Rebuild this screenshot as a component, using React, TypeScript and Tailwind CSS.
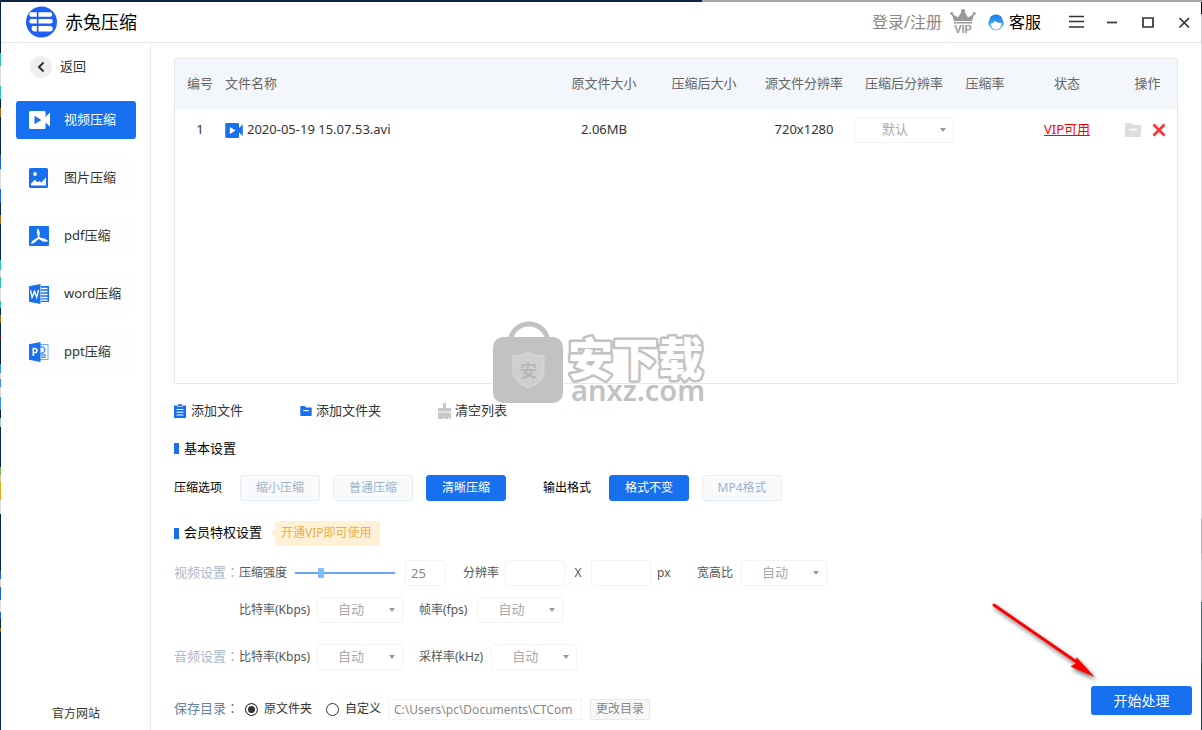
import { useState, type ReactNode } from "react";
import clsx from "clsx";

const MENU = [
  { id: "video", label: "视频压缩", icon: <VideoIcon className="h-[18px] w-[21px]" /> },
  { id: "image", label: "图片压缩", icon: <ImageIcon /> },
  { id: "pdf", label: "pdf压缩", icon: <PdfIcon /> },
  { id: "word", label: "word压缩", icon: <WordIcon /> },
  { id: "ppt", label: "ppt压缩", icon: <PptIcon /> },
];

// desktop showing through next to the window: [share of height, colour]
const LEFT_EDGE: [number, string][] = [
  [51, "#06234a"], [13, "#1fc4c4"], [20, "#d8dcdf"], [13, "#1fc4c4"], [9, "#06234a"], [9, "#b06a10"],
  [39, "#06234a"], [14, "#1f62e8"], [20, "#dcdcdc"], [14, "#1f62e8"], [12, "#06234a"], [9, "#b06a10"],
  [36, "#06234a"], [10, "#1fc4c4"], [7, "#dcdcdc"], [11, "#1fc4c4"], [13, "#dcdcdc"], [7, "#1fc4c4"],
  [7, "#06234a"], [8, "#b06a10"], [12, "#06234a"], [5, "#7a0c1c"], [24, "#06234a"], [9, "#3592e8"],
  [6, "#dcdcdc"], [9, "#3592e8"], [10, "#dcdcdc"], [13, "#3592e8"], [8, "#06234a"], [9, "#9cc8c8"],
  [40, "#06234a"], [8, "#74b84a"], [7, "#c9c9a0"], [18, "#e8a818"], [14, "#dcdcdc"], [57, "#06234a"],
  [8, "#1f62e8"], [8, "#dcdcdc"], [13, "#1f62e8"], [12, "#dcdcdc"], [7, "#1f62e8"], [10, "#06234a"],
  [4, "#b06a10"], [98, "#06234a"],
];

const RIGHT_EDGE: [number, string][] = [
  [12, "#111"], [30, "#cfcfcf"], [475, "#dedede"], [35, "#b4b4b4"], [50, "#c8c8c8"], [60, "#1b74b4"], [68, "#134a78"],
];

function Edge({ bands }: { bands: [number, string][] }) {
  return (
    <div className="flex w-px shrink-0 flex-col" aria-hidden>
      {bands.map(([share, color], i) => (
        <span key={i} style={{ flexGrow: share, backgroundColor: color }} />
      ))}
    </div>
  );
}

function LogoIcon() {
  return (
    <svg viewBox="0 0 32 32" className="size-8">
      <circle cx="16.500" cy="16" r="15.500" fill="#1f5ff5" />
      <g fill="#fff">
        <path d="M7.500 6.300h4.300v4.500H6A2.300 2.300 0 0 1 7.500 6.300zM13.500 6.300h11.500a2.250 2.250 0 0 1 0 4.500H13.500z" />
        <path d="M6.500 13h5.300v4.500H6.500a2.250 2.250 0 0 1 0-4.500zM13.500 13h12a2.250 2.250 0 0 1 0 4.500h-12z" />
        <path d="M7.300 20h4.500v5.500H9a3.500 3.500 0 0 1-1.700-5.500zM13.500 20h11.500a2.700 2.700 0 0 1 0 5.500H13.500z" />
      </g>
    </svg>
  );
}

function VideoIcon({ className }: { className?: string }) {
  return (
    <svg viewBox="0 0 21 18" className={className}>
      <path
        fillRule="evenodd"
        fill="currentColor"
        d="M1.500 0H15a1.500 1.500 0 0 1 1.500 1.500V6L21 1.500v14L16.500 11.500v5A1.500 1.500 0 0 1 15 18H1.500A1.500 1.500 0 0 1 0 16.500v-15A1.500 1.500 0 0 1 1.500 0zM5.500 4.800v8.400l6.800-4.200z"
      />
    </svg>
  );
}

function ImageIcon() {
  return (
    <svg viewBox="0 0 20 20" className="size-5">
      <rect width="19" height="20" rx="1.500" fill="#1670f0" />
      <circle cx="6" cy="6" r="1.900" fill="#fff" />
      <path d="M2 17.500v-2l3.800-3.700 2.700 2.400 1.800-1.200 2 1.500L17 9.500v8z" fill="#fff" />
    </svg>
  );
}

function PdfIcon() {
  return (
    <svg viewBox="0 0 20 20" className="size-5">
      <rect width="20" height="20" rx="1" fill="#1670f0" />
      <path
        d="M8.800 3.500c2 2.300 1.600 5.300 0 8.500-1.500 2.600-4 4.500-6 5 1.600-2.500 4.200-4 7.200-4.500 3-.4 6 .3 8 2.300-3 .7-6-.8-7.700-3.300C8.800 9.500 8.300 6 8.800 3.500z"
        fill="none"
        stroke="#fff"
        strokeWidth="1.400"
        strokeLinejoin="round"
      />
    </svg>
  );
}

function WordIcon() {
  return (
    <svg viewBox="0 0 20 20" className="size-5">
      <path d="M12 2h8v16h-8z" fill="#1670f0" />
      <path d="M12 4.500h6.500M12 7.500h6.500M12 10.500h6.500M12 13.500h6.500M12 16.200h6.500" stroke="#fff" strokeWidth="1.300" />
      <path d="M0 2.200L11.500 0v20L0 17.800z" fill="#1670f0" />
      <path d="M1.500 6.300l1.600 7L5.500 7.500l2.200 5.800 1.800-7.300" fill="none" stroke="#fff" strokeWidth="1.400" />
    </svg>
  );
}

function PptIcon() {
  return (
    <svg viewBox="0 0 20 20" className="size-5">
      <path d="M11 2.500h8v15h-8" fill="#fff" stroke="#6ba5f7" />
      <path d="M11.500 5a3.200 3.200 0 1 1 0 6M12 13h5M12 15.300h5" fill="none" stroke="#4b90f5" strokeWidth="1.500" />
      <path d="M0 2.200L11.500 0v20L0 17.800z" fill="#1670f0" />
      <path d="M4.300 14V6.500h1.500a2 2 0 0 1 0 4.200H4.300" fill="none" stroke="#fff" strokeWidth="1.600" />
    </svg>
  );
}

function FolderIcon({ className }: { className?: string }) {
  return (
    <svg viewBox="0 0 16 14" className={className}>
      <path d="M0 1a1 1 0 0 1 1-1h5l2 2h7a1 1 0 0 1 1 1v10a1 1 0 0 1-1 1H1a1 1 0 0 1-1-1z" fill="currentColor" />
      <path d="M4 6.500h8" stroke="#fff" strokeWidth="1.500" />
    </svg>
  );
}

function ClipboardIcon() {
  return (
    <svg viewBox="0 0 12 14" className="h-3.5 w-3 text-[#1670f0]">
      <path d="M0 1.500h12V14H0z" fill="currentColor" />
      <path d="M3.500 0h5v2.500h-5z" fill="currentColor" stroke="#fff" strokeWidth=".6" />
      <path d="M2.500 5.500h7M2.500 8.200h7M2.500 11h7" stroke="#fff" />
    </svg>
  );
}

function BrushIcon() {
  return (
    <svg viewBox="0 0 13 16" className="h-4 w-[13px]">
      <path d="M5 0h3v5h5v3.500H0V5h5zM0 9.500h13V16h-2v-1.500h-1V16H6.500v-1.500h-1V16H0z" fill="#c8c8c8" />
    </svg>
  );
}

function VipCrown() {
  return (
    <svg viewBox="0 0 26 26" className="h-[26px] w-[26px]">
      <g fill="#999">
        <circle cx="13" cy="2" r="2" />
        <circle cx="1.800" cy="4.500" r="1.500" />
        <circle cx="24.200" cy="4.500" r="1.500" />
        <path d="M1.500 4.500l6.500 4L12 2h2l4 6.500 6.500-4L22 12H4zM4 13h18v1.500H4z" />
        <text x="13" y="24" textAnchor="middle" fontSize="11" fontWeight="700" fontFamily="Liberation Sans, sans-serif">
          VIP
        </text>
      </g>
    </svg>
  );
}

function ServiceIcon() {
  return (
    <svg viewBox="0 0 16 17" className="h-[17px] w-4">
      <defs>
        <linearGradient id="hair" x1="0" y1="0" x2="0" y2="1">
          <stop offset="0" stopColor="#1f7fe8" />
          <stop offset="1" stopColor="#4ab4fa" />
        </linearGradient>
      </defs>
      <path
        d="M1.300 6.500C1.500 2.800 4.300.5 8 .5s6.500 2.300 6.700 6C16 8 16 10.500 14.500 12c-1.300 2.800-3.700 4.300-6.500 4.300S2.800 14.800 1.500 12C0 10.500 0 8 1.300 6.500z"
        fill="url(#hair)"
      />
      <path d="M2.500 9.500c2.200-.2 3.500-1.300 4.300-2.800 1.500 1.300 4 2.300 6.700 2.300.3 4-2.500 6.500-5.500 6.500s-5.300-2.600-5.500-6z" fill="#fff" />
    </svg>
  );
}

function Watermark() {
  return (
    <svg viewBox="0 0 216 84" className="pointer-events-none absolute bottom-[-24px] left-[317px] w-[216px] overflow-visible">
      <path d="M18 20a19 19 0 0 1 38 0" fill="none" stroke="#c2c2c2" strokeWidth="5" />
      <rect x="1" y="14" width="70" height="66" rx="10" fill="#c2c2c2" />
      <path
        d="M36.500 29c5 3 10 4 15.500 4v15c0 8-6 13-15.500 17C27 61 21 56 21 48V33c5.500 0 10.500-1 15.500-4z"
        fill="#cfcfcd"
        stroke="#dadada"
      />
      <text x="36.500" y="54" textAnchor="middle" fontSize="17" fontWeight="700" fill="#b8b8b8">
        安
      </text>
      <text
        x="76"
        y="53"
        fontSize="45"
        fontWeight="900"
        fill="#fff"
        stroke="#c2c2c2"
        strokeWidth="5"
        strokeLinejoin="round"
        paintOrder="stroke"
      >
        安下载
      </text>
      <text x="79" y="78" fontSize="29" fontWeight="600" fill="#c2c2c2">
        anxz.com
      </text>
    </svg>
  );
}

function Header() {
  return (
    <header className="flex h-[41px] shrink-0 items-center border-b border-[#e8e8e8] bg-white pr-1.5 pl-6">
      <LogoIcon />
      <h1 className="ml-2 flex-1 text-lg text-black">赤兔压缩</h1>
      <a href="#login" className="text-base text-[#8a8a8a]">
        登录/注册
      </a>
      <a href="#vip" aria-label="VIP" className="ml-2">
        <VipCrown />
      </a>
      <a href="#service" className="ml-3 flex items-center gap-[5px] text-base text-black">
        <ServiceIcon />
        客服
      </a>
      <div className="ml-6 flex items-center gap-[14px] text-[#333]">
        <WinButton label="菜单">
          <path d="M4 5.500h15M4 10.500h15M4 16h15" />
        </WinButton>
        <WinButton label="最小化">
          <path d="M6 11.500h10" />
        </WinButton>
        <WinButton label="最大化">
          <path d="M6 7h10v9H6z" />
        </WinButton>
        <WinButton label="关闭">
          <path d="M6.500 7l9.500 9.500M16 7l-9.500 9.500" />
        </WinButton>
      </div>
    </header>
  );
}

function WinButton({ label, children }: { label: string; children: ReactNode }) {
  return (
    <button type="button" aria-label={label}>
      <svg viewBox="0 0 22 22" className="size-[22px]" fill="none" stroke="currentColor" strokeWidth="1.700">
        {children}
      </svg>
    </button>
  );
}

function Sidebar() {
  const [active, setActive] = useState("video");
  return (
    <aside className="flex w-[150px] shrink-0 flex-col border-r border-[#e8e8e8] pr-[14px] pb-2 pl-[15px]">
      <button type="button" className="mt-3 flex h-6 items-center gap-2 pl-[14px] text-[13px] text-[#333]">
        <svg viewBox="0 0 22 22" className="size-[22px]">
          <circle cx="11" cy="11" r="11" fill="#eee" />
          <path d="M13.500 6.500L9 11l4.500 4.500" fill="none" stroke="#333" strokeWidth="2" />
        </svg>
        返回
      </button>
      <nav className="mt-[22px] flex flex-col gap-5">
        {MENU.map((m) => (
          <button
            key={m.id}
            type="button"
            onClick={() => setActive(m.id)}
            className={clsx(
              "flex h-[38px] items-center rounded-[3px] pl-[13px] text-[13px]",
              active === m.id ? "bg-[#1670f0] text-white" : "bg-[#fdfdfd] text-[#333]",
            )}
          >
            <span className="w-[35px]">{m.icon}</span>
            {m.label}
          </button>
        ))}
      </nav>
      <a href="#site" className="mt-auto text-center text-xs text-[#333]">
        官方网站
      </a>
    </aside>
  );
}

function Dropdown({ id, label, value, className }: { id: string; label?: string; value: string; className?: string }) {
  return (
    <div className={clsx("relative h-[26px]", className)}>
      <select
        id={id}
        aria-label={label}
        className="h-full w-full appearance-none rounded-[3px] border border-[#eff4fa] bg-white pr-[18px] text-center text-[13px] text-[#aaa] [text-align-last:center]"
      >
        <option>{value}</option>
      </select>
      <svg viewBox="0 0 6 4" className="pointer-events-none absolute top-[11px] right-2 h-1 w-1.5">
        <path d="M0 0h6L3 4z" fill="#999" />
      </svg>
    </div>
  );
}

function FileTable() {
  return (
    <div className="relative flex-1 border border-[#e6e8ea] bg-white">
      <table className="w-full table-fixed text-[13px] text-[#333]">
        <colgroup>
          <col className="w-[50px]" />
          <col />
          <col className="w-[100px]" />
          <col className="w-[100px]" />
          <col className="w-[100px]" />
          <col className="w-[100px]" />
          <col className="w-[62px]" />
          <col className="w-[102px]" />
          <col className="w-[59px]" />
        </colgroup>
        <thead>
          <tr className="h-[50px] bg-[#f3f6fa] text-[#666] *:p-0 *:font-normal">
            <th>编号</th>
            <th className="text-left">文件名称</th>
            <th>原文件大小</th>
            <th>压缩后大小</th>
            <th>源文件分辨率</th>
            <th>压缩后分辨率</th>
            <th>压缩率</th>
            <th>状态</th>
            <th>操作</th>
          </tr>
        </thead>
        <tbody>
          <tr className="h-[42px] text-center *:p-0">
            <td>1</td>
            <td>
              <span className="flex items-center gap-1">
                <VideoIcon className="h-[15px] w-[18px] text-[#1670f0]" />
                2020-05-19 15.07.53.avi
              </span>
            </td>
            <td>2.06MB</td>
            <td />
            <td>720x1280</td>
            <td>
              <Dropdown id="row-res" label="压缩后分辨率" value="默认" />
            </td>
            <td />
            <td>
              <a href="#vip" className="text-[#f00] underline">
                VIP可用
              </a>
            </td>
            <td>
              <span className="flex items-center gap-[11px] pl-[7px]">
                <button type="button" aria-label="打开文件夹">
                  <FolderIcon className="h-3.5 w-4 text-[#ddd]" />
                </button>
                <button type="button" aria-label="删除">
                  <svg viewBox="0 0 14 14" className="size-3.5" stroke="#f33" strokeWidth="2.700">
                    <path d="M1.500 1.500l11 11M12.500 1.500l-11 11" />
                  </svg>
                </button>
              </span>
            </td>
          </tr>
        </tbody>
      </table>
      <Watermark />
    </div>
  );
}

function SectionTitle({ children }: { children: ReactNode }) {
  return (
    <h2 className="flex items-center gap-[5px] text-[13px] text-black">
      <span className="h-[11px] w-[5px] bg-[#1670f0]" />
      {children}
    </h2>
  );
}

function RowTitle({ children, className }: { children: ReactNode; className: string }) {
  return (
    <span className={clsx("text-[13px] whitespace-nowrap", className)}>
      {children}
      <span className="font-['Noto_Sans_CJK_TC',sans-serif] leading-none" lang="zh-TW">
        ：
      </span>
    </span>
  );
}

function OptionGroup({ label, options, initial }: { label: string; options: string[]; initial: string }) {
  const [picked, setPicked] = useState(initial);
  return (
    <div role="group" aria-label={label} className="flex items-center gap-[13px] text-xs">
      <span className="mr-[5px] text-black">{label}</span>
      {options.map((o) => (
        <button
          key={o}
          type="button"
          onClick={() => setPicked(o)}
          className={clsx(
            "h-[26px] w-20 rounded-[3px] border",
            picked === o ? "border-[#1670f0] bg-[#1670f0] text-white" : "border-[#e6edf6] bg-[#f8fafc] text-[#9fb2c9]",
          )}
        >
          {o}
        </button>
      ))}
    </div>
  );
}

const box = "h-[26px] rounded-[3px] border border-[#eff4fa] bg-white px-[5px] text-[13px] text-[#888]";

function Settings() {
  return (
    <div className="text-xs text-[#555]">
      <div className="flex h-[49px] items-center">
        <RowTitle className="w-[65px] text-[#a9b9ce]">视频设置</RowTitle>
        <label htmlFor="strength">压缩强度</label>
        <input
          id="strength"
          type="range"
          defaultValue={24}
          className="ml-2 h-3 w-[100px] appearance-none bg-transparent [&::-webkit-slider-runnable-track]:h-0.5 [&::-webkit-slider-runnable-track]:bg-[#6ba3f8] [&::-webkit-slider-thumb]:-mt-1 [&::-webkit-slider-thumb]:h-2.5 [&::-webkit-slider-thumb]:w-1.5 [&::-webkit-slider-thumb]:appearance-none [&::-webkit-slider-thumb]:rounded-[1px] [&::-webkit-slider-thumb]:bg-[#7ebcfa]"
        />
        <input aria-label="强度" defaultValue="25" className={clsx(box, "ml-[10px] w-10")} />
        <label htmlFor="res-w" className="ml-[18px]">
          分辨率
        </label>
        <input id="res-w" className={clsx(box, "ml-1.5 w-[60px]")} />
        <span className="w-[26px] text-center">X</span>
        <input aria-label="高度" className={clsx(box, "w-[60px]")} />
        <span className="ml-1.5 w-10">px</span>
        <label htmlFor="ratio">宽高比</label>
        <Dropdown id="ratio" value="自动" className="ml-2 w-[86px]" />
      </div>
      <div className="flex items-center pl-[65px]">
        <label htmlFor="v-rate" className="w-[78px]">
          比特率(Kbps)
        </label>
        <Dropdown id="v-rate" value="自动" className="w-[86px]" />
        <label htmlFor="fps" className="mr-2.5 ml-4">
          帧率(fps)
        </label>
        <Dropdown id="fps" value="自动" className="w-[86px]" />
      </div>
      <div className="mt-[21px] flex items-center">
        <RowTitle className="w-[65px] text-[#a9b9ce]">音频设置</RowTitle>
        <label htmlFor="a-rate" className="w-[78px]">
          比特率(Kbps)
        </label>
        <Dropdown id="a-rate" value="自动" className="w-[86px]" />
        <label htmlFor="sample" className="mr-2 ml-4">
          采样率(kHz)
        </label>
        <Dropdown id="sample" value="自动" className="w-[86px]" />
      </div>
    </div>
  );
}

function Radio({ label, checked }: { label: string; checked?: boolean }) {
  return (
    <label className="mr-[14px] flex items-center gap-1.5 text-[#333]">
      <input
        type="radio"
        name="dir"
        defaultChecked={checked}
        className="size-[13px] appearance-none rounded-full border border-[#333] bg-white checked:bg-[#333] checked:shadow-[inset_0_0_0_2px_#fff]"
      />
      {label}
    </label>
  );
}

function SaveBar() {
  return (
    <div className="relative mt-4 flex justify-between text-xs">
      <div className="flex h-11 items-center pt-0.5">
        <RowTitle className="w-[71px] text-[#6482a8]">保存目录</RowTitle>
        <Radio label="原文件夹" checked />
        <Radio label="自定义" />
        <input
          aria-label="保存目录"
          defaultValue="C:\Users\pc\Documents\CTCom"
          className="-ml-[7px] h-[21px] w-[194px] border border-[#eff4fa] bg-white px-[5px] text-[#888]"
        />
        <button type="button" className="ml-2 h-[21px] w-[60px] border border-[#e8e8e8] bg-[#f7f7f7] text-[#888]">
          更改目录
        </button>
      </div>
      <button type="button" className="-mr-[14px] h-[29px] w-[101px] rounded-[3px] bg-[#1670f0] text-sm text-white">
        开始处理
      </button>
      <svg
        viewBox="0 0 112 84"
        className="pointer-events-none absolute right-[76px] bottom-[45px] w-28 drop-shadow-[2px_3px_2px_rgba(0,0,0,0.6)]"
      >
        <path d="M4 4l84 58" stroke="#f00" strokeWidth="3" strokeLinecap="round" />
        <path d="M86.500 56l18 20-24-10.500 5-3z" fill="#f00" />
      </svg>
    </div>
  );
}

export default function App() {
  return (
    <div className="flex min-h-screen flex-col bg-white font-['Noto_Sans','Noto_Sans_CJK_SC',sans-serif]">
      <div className="h-0.5 shrink-0 bg-linear-to-r from-[#0a2346] from-[58.4%] to-[#a8a8ac] to-[58.4%]" />
      <div className="flex flex-1">
        <Edge bands={LEFT_EDGE} />
        <div className="flex min-w-0 flex-1 flex-col">
          <Header />
          <div className="flex flex-1">
            <Sidebar />
            <main className="flex min-w-0 flex-1 flex-col px-[23px] pt-[15px]">
              <FileTable />
              <div className="flex h-[55px] items-center gap-[57px] text-[13px] text-[#333]">
                <button type="button" className="flex items-center gap-[5px]">
                  <ClipboardIcon />
                  添加文件
                </button>
                <button type="button" className="flex items-center gap-1">
                  <FolderIcon className="h-2.5 w-3 text-[#1670f0]" />
                  添加文件夹
                </button>
                <button type="button" className="flex items-center gap-1">
                  <BrushIcon />
                  清空列表
                </button>
              </div>
              <SectionTitle>基本设置</SectionTitle>
              <div className="flex h-[60px] items-center gap-[37px]">
                <OptionGroup label="压缩选项" options={["缩小压缩", "普通压缩", "清晰压缩"]} initial="清晰压缩" />
                <OptionGroup label="输出格式" options={["格式不变", "MP4格式"]} initial="格式不变" />
              </div>
              <div className="flex h-[30px] items-center gap-[13px]">
                <SectionTitle>会员特权设置</SectionTitle>
                <a
                  href="#vip"
                  className="relative flex h-[25px] w-[105px] items-center rounded-[3px] bg-[#fff1d6] px-1.5 text-xs text-[#eab04c] before:absolute before:top-2 before:-left-1 before:border-y-4 before:border-r-4 before:border-y-transparent before:border-r-[#fff1d6]"
                >
                  开通VIP即可使用
                </a>
              </div>
              <Settings />
              <SaveBar />
            </main>
          </div>
        </div>
        <Edge bands={RIGHT_EDGE} />
      </div>
    </div>
  );
}
